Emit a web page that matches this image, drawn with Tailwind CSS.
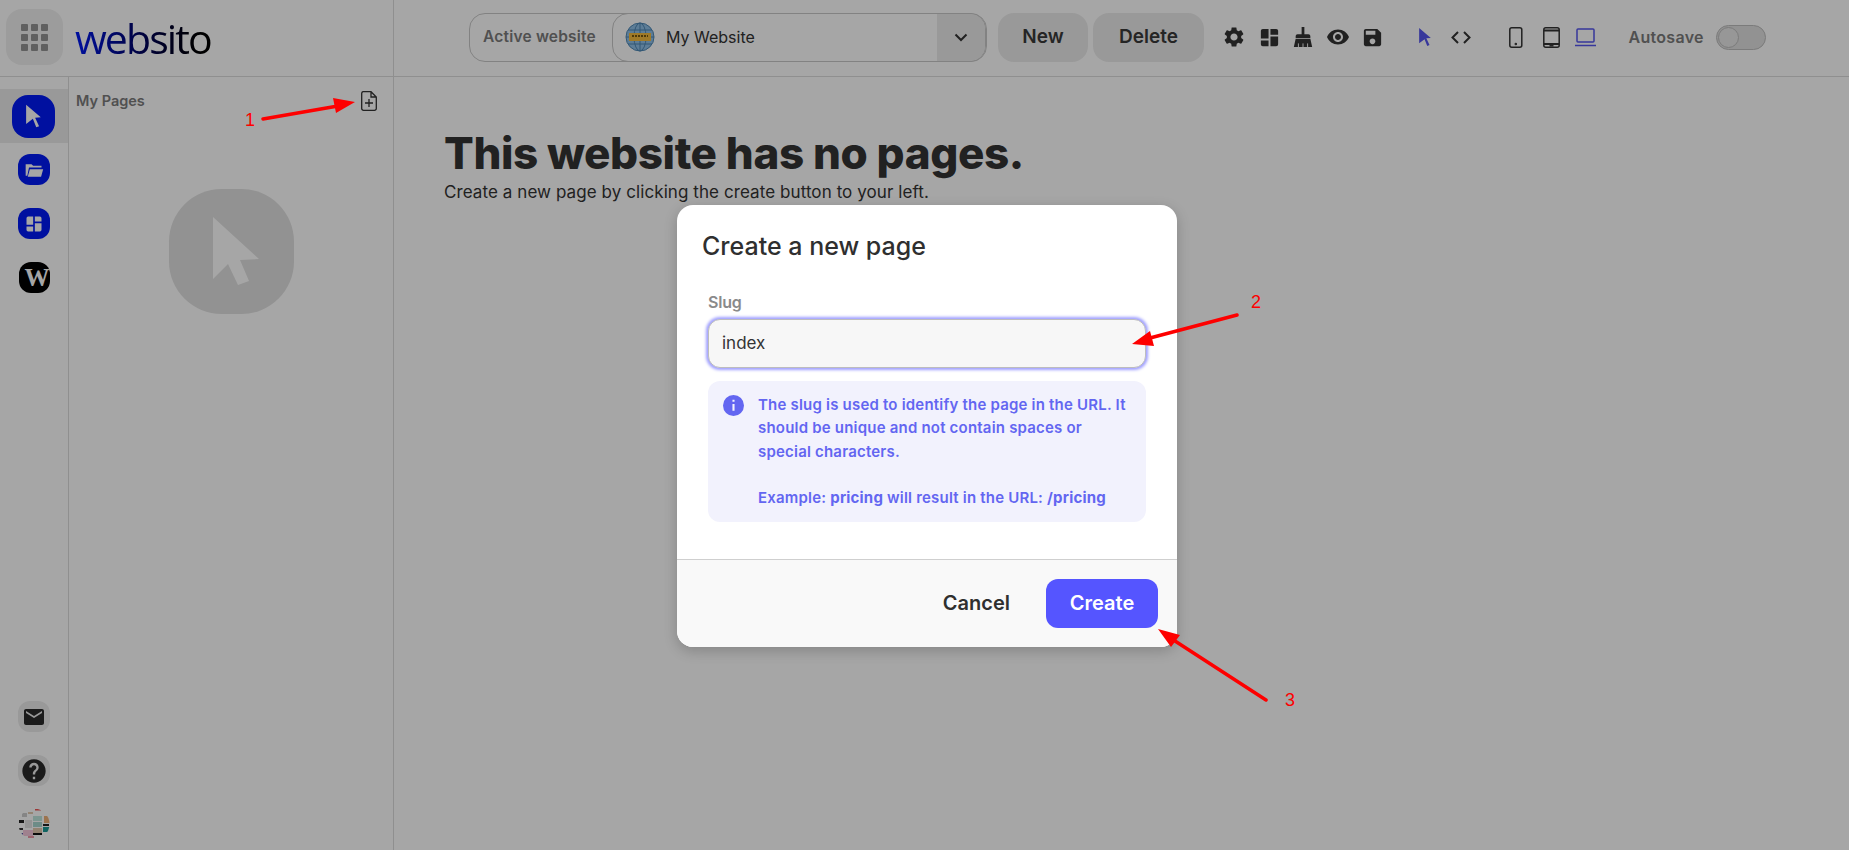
<!doctype html>
<html lang="en">
<head>
<meta charset="utf-8">
<title>Websito</title>
<script src="https://cdn.jsdelivr.net/npm/@tailwindcss/browser@4"></script>
</head>
<body class="overflow-hidden bg-white">
<div class="relative flex h-[850px] w-[1849px] flex-col overflow-hidden bg-white font-['Inter',sans-serif] text-[#3a3a3a]">
  <!-- header -->
  <header class="flex h-[77px] shrink-0 items-center border-b border-[#dcdcdc] pb-[2px]">
    <div class="ml-[6px] flex h-[56px] w-[57px] items-center justify-center rounded-2xl bg-[#f0f0f0]">
      <div class="grid grid-cols-3 gap-[3px]">
        <span class="h-[7px] w-[7px] rounded-[1px] bg-[#949494]"></span><span class="h-[7px] w-[7px] rounded-[1px] bg-[#949494]"></span><span class="h-[7px] w-[7px] rounded-[1px] bg-[#949494]"></span>
        <span class="h-[7px] w-[7px] rounded-[1px] bg-[#949494]"></span><span class="h-[7px] w-[7px] rounded-[1px] bg-[#949494]"></span><span class="h-[7px] w-[7px] rounded-[1px] bg-[#949494]"></span>
        <span class="h-[7px] w-[7px] rounded-[1px] bg-[#949494]"></span><span class="h-[7px] w-[7px] rounded-[1px] bg-[#949494]"></span><span class="h-[7px] w-[7px] rounded-[1px] bg-[#949494]"></span>
      </div>
    </div>
    <div class="mt-[2px] ml-[12px] w-[318px]"><span class="bg-linear-to-r from-[#0019f6] to-black bg-clip-text font-['Open_Sans',sans-serif] text-[41px] leading-[48px] font-medium tracking-[-1.900px] text-transparent">websito</span></div>
    <div class="h-[76px] w-px self-start bg-[#dcdcdc]"></div>

    <div class="ml-[75px] flex h-[49px] w-[518px] items-center rounded-2xl border border-[#c8c8c8]">
      <span class="w-[142px] pl-[13px] text-[15.500px] font-semibold tracking-[0.200px] text-[#7c7c7c]">Active website</span>
      <div class="flex h-[49px] flex-1 items-center overflow-hidden rounded-2xl border border-[#c8c8c8]">
        <svg class="ml-[12px] h-[30px] w-[30px]" viewBox="0 0 30 30"><circle cx="15" cy="15" r="14" fill="#8fc0e8" stroke="#4f87b4"/><g fill="none" stroke="#4f87b4"><ellipse cx="15" cy="15" rx="6" ry="14"/><path d="M1 15h28M3 8h24M3 22h24M15 1v28"/></g><rect x="4" y="11" width="22" height="8" fill="#f6bc3e"/><path d="M7 14h16" stroke="#7a5a10" stroke-width="2" stroke-dasharray="2 1"/></svg>
        <span class="ml-[11px] flex-1 text-[16px] text-[#333]">My Website</span>
        <div class="flex h-full w-[48px] items-center justify-center bg-[#ebebeb]">
          <svg class="h-[14px] w-[14px]" viewBox="0 0 14 14" fill="none" stroke="#333" stroke-width="2"><path d="M1.500 4.500 7 10l5.500-5.500"/></svg>
        </div>
      </div>
    </div>

    <button class="ml-[11px] h-[49px] w-[90px] rounded-2xl bg-[#ececec] text-[19px] font-semibold text-[#3a3a3a]">New</button>
    <button class="ml-[5px] h-[49px] w-[111px] rounded-2xl bg-[#ececec] text-[19px] font-semibold text-[#3a3a3a]">Delete</button>

    <div class="ml-[18px] flex items-center gap-[11.500px] text-[#333]">
      <svg class="h-[24px] w-[24px]" viewBox="0 0 24 24" fill="currentColor"><path d="M19.140 12.940c.04-.3.06-.61.06-.94 0-.32-.02-.64-.07-.94l2.030-1.580c.18-.14.23-.41.12-.61l-1.920-3.320c-.12-.22-.37-.29-.59-.22l-2.390.96c-.5-.38-1.030-.7-1.620-.94l-.36-2.540c-.04-.24-.24-.41-.48-.41h-3.840c-.24 0-.43.17-.47.41l-.36 2.540c-.59.24-1.130.57-1.620.94l-2.390-.96c-.22-.08-.47 0-.59.22L2.740 8.870c-.12.21-.08.47.12.61l2.030 1.580c-.05.3-.09.63-.09.94s.02.64.07.94l-2.030 1.580c-.18.14-.23.41-.12.61l1.920 3.320c.12.22.37.29.59.22l2.390-.96c.5.38 1.030.7 1.620.94l.36 2.540c.05.24.24.41.48.41h3.840c.24 0 .44-.17.47-.41l.36-2.540c.59-.24 1.130-.56 1.620-.94l2.390.96c.22.08.47 0 .59-.22l1.920-3.320c.12-.22.07-.47-.12-.61l-2.010-1.580zM12 15.600c-1.980 0-3.600-1.620-3.600-3.600s1.620-3.600 3.600-3.600 3.600 1.620 3.600 3.600-1.620 3.600-3.600 3.600z"/></svg>
      <svg class="h-[23px] w-[23px]" viewBox="0 0 24 24" fill="currentColor"><path d="M3 13h8V3H5a2 2 0 0 0-2 2v8zm0 8h8v-6H3v4a2 2 0 0 0 2 2zm10 0h6a2 2 0 0 0 2-2v-8h-8v10zm0-18v6h8V5a2 2 0 0 0-2-2h-6z"/></svg>
      <svg class="h-[22px] w-[22px]" viewBox="0 0 24 24" fill="currentColor"><path d="M10.500 1h3v8h4.500a2 2 0 0 1 2 2v2H4v-2a2 2 0 0 1 2-2h4.500V1zM4 14h16l2 9H2l2-9z"/><path d="M7 23v-4M12 23v-4M17 23v-4" stroke="#fff" stroke-width="1"/></svg>
      <svg class="h-[24px] w-[24px]" viewBox="0 0 24 24" fill="currentColor"><path d="M12 4.500C7 4.500 2.730 7.610 1 12c1.730 4.390 6 7.500 11 7.500s9.270-3.110 11-7.500c-1.730-4.390-6-7.500-11-7.500zM12 17c-2.760 0-5-2.240-5-5s2.240-5 5-5 5 2.240 5 5-2.240 5-5 5zm0-8c-1.660 0-3 1.340-3 3s1.340 3 3 3 3-1.340 3-3-1.340-3-3-3z"/></svg>
      <svg class="h-[23px] w-[23px]" viewBox="0 0 24 24" fill="currentColor"><path d="M17 3H5c-1.110 0-2 .9-2 2v14c0 1.100.89 2 2 2h14c1.100 0 2-.9 2-2V7l-4-4zm-5 16c-1.660 0-3-1.340-3-3s1.340-3 3-3 3 1.340 3 3-1.340 3-3 3zm3-10H5V5h10v4z"/></svg>
    </div>
    <div class="ml-[34px] flex items-center gap-[19px]">
      <svg class="h-[18px] w-[14px]" viewBox="0 0 15 20" fill="#5555ee"><path d="M1 0 14 11l-5 .5L12.500 19l-2.500 1-3-7.500L1 17z"/></svg>
      <svg class="h-[13px] w-[20px]" viewBox="0 0 20 13" fill="none" stroke="#333" stroke-width="2"><path d="M7 1 1.500 6.500 7 12M13 1l5.500 5.500L13 12"/></svg>
    </div>
    <div class="ml-[38px] flex items-center">
      <svg class="h-[21px] w-[14px]" viewBox="0 0 14 21" fill="none" stroke="#333" stroke-width="1.500"><rect x=".8" y=".8" width="12" height="19.400" rx="2"/><circle cx="6.800" cy="17" r=".5"/></svg>
      <svg class="ml-[19.500px] h-[21px] w-[17px]" viewBox="0 0 17 21" fill="none" stroke="#333" stroke-width="1.500"><rect x=".8" y=".8" width="15.400" height="19.400" rx="2"/><path d="M1 3.500h15M1 17h15" stroke-width="2"/><path d="M6.500 18.800h4"/></svg>
      <svg class="ml-[15px] h-[19px] w-[21px]" viewBox="0 0 21 19" fill="none" stroke="#5555ee" stroke-width="1.500"><rect x="2" y="1" width="17" height="13" rx="1"/><path d="M0 17.500h21"/></svg>
    </div>
    <span class="ml-[33px] w-[87px] text-[16px] font-semibold tracking-[0.300px] text-[#7c7c7c]">Autosave</span>
    <div class="flex h-[25px] w-[50px] items-center rounded-full border border-[#bdbdbd] bg-[#e0e0e0] pl-px">
      <span class="h-[21px] w-[21px] rounded-full border border-[#bdbdbd] bg-[#e8e8e8]"></span>
    </div>
  </header>

  <div class="flex min-h-0 flex-1">
    <!-- rail -->
    <aside class="flex w-[69px] shrink-0 flex-col items-center border-r border-[#dcdcdc] pt-[12px] pb-[10px]">
      <div class="flex h-[54px] w-full items-center bg-[#ebebeb] pl-[12px]">
        <div class="flex h-[43px] w-[43px] items-center justify-center rounded-2xl bg-[#0019f6]">
          <svg class="h-[24px] w-[18px]" viewBox="0 0 16 20" fill="#fff"><path d="M1 0 14 11l-5 .5L12.500 19l-2.500 1-3-7.500L1 17z"/></svg>
        </div>
      </div>
      <div class="mt-[11px] flex h-[31px] w-[32px] items-center justify-center rounded-xl bg-[#0019f6]">
        <svg class="h-[20px] w-[20px]" viewBox="0 0 24 24" fill="#fff"><path d="M2 5h7l2 2h10v2H6l-2 10H2zM7 11h16l-2.500 9H4.500z"/></svg>
      </div>
      <div class="mt-[23px] flex h-[31px] w-[32px] items-center justify-center rounded-xl bg-[#0019f6]">
        <svg class="h-[20px] w-[20px]" viewBox="0 0 24 24" fill="#fff"><path d="M3 13h8V3H5a2 2 0 0 0-2 2v8zm0 8h8v-6H3v4a2 2 0 0 0 2 2zm10 0h6a2 2 0 0 0 2-2v-8h-8v10zm0-18v6h8V5a2 2 0 0 0-2-2h-6z"/></svg>
      </div>
      <div class="mt-[23px] flex h-[31px] w-[31px] items-center rounded-xl bg-black pl-[6px] font-['Liberation_Serif',serif] text-[25px] leading-none font-bold text-white">W</div>

      <div class="mt-auto flex h-[31px] w-[32px] items-center justify-center rounded-xl bg-[#ebebeb]">
        <svg class="h-[24px] w-[24px]" viewBox="0 0 24 24" fill="#2a2a2a"><path d="M20 4H4c-1.100 0-2 .9-2 2v12c0 1.100.9 2 2 2h16c1.100 0 2-.9 2-2V6c0-1.100-.9-2-2-2zm0 4-8 5-8-5V6l8 5 8-5v2z"/></svg>
      </div>
      <div class="mt-[23px] flex h-[31px] w-[32px] items-center justify-center rounded-xl bg-[#ebebeb]">
        <svg class="h-[28px] w-[28px]" viewBox="0 0 24 24" fill="#2a2a2a"><path d="M12 2C6.480 2 2 6.480 2 12s4.480 10 10 10 10-4.480 10-10S17.520 2 12 2zm1 17h-2v-2h2v2zm2.070-7.750-.9.92C13.450 12.900 13 13.500 13 15h-2v-.5c0-1.100.45-2.100 1.170-2.830l1.240-1.260c.37-.36.59-.86.59-1.410 0-1.100-.9-2-2-2s-2 .9-2 2H8c0-2.210 1.790-4 4-4s4 1.790 4 4c0 .88-.36 1.680-.93 2.250z"/></svg>
      </div>
      <svg class="mt-[22px] h-[32px] w-[32px]" viewBox="0 0 32 32"><clipPath id="c"><circle cx="16" cy="16" r="15.500"/></clipPath><g clip-path="url(#c)"><rect width="32" height="32" fill="#fff"/><rect x="26" y="8" width="6" height="7" fill="#f0b27a"/><rect x="25" y="19" width="7" height="5" fill="#1a9a95"/><rect x="15" y="8" width="9" height="5" fill="#bfe6de"/><rect x="15" y="14" width="9" height="5" fill="#a8d8d0"/><rect x="5" y="22" width="10" height="6" fill="#f4c6da"/><rect x="15" y="20" width="9" height="5" fill="#e2c9b0"/><rect x="1" y="12" width="5" height="3" fill="#222"/><rect x="15" y="25" width="9" height="2" fill="#111"/><rect x="25" y="16" width="6" height="2" fill="#222"/><rect x="17" y="1" width="6" height="1.500" fill="#e55"/><rect x="4" y="5" width="5" height="4" fill="#ccc"/><rect x="10" y="4" width="5" height="2" fill="#e2c9b0"/><rect x="10" y="28" width="6" height="2" fill="#e9a"/><rect x="1" y="20" width="4" height="2" fill="#333"/><rect x="7" y="12" width="7" height="8" fill="#e4e4e4"/><rect x="3" y="25" width="2" height="2" fill="#55a"/></g></svg>
    </aside>

    <!-- pages panel -->
    <section class="w-[325px] shrink-0 border-r border-[#dcdcdc] pl-[7px]">
      <div class="flex justify-between pt-[14px] pr-[16px]">
        <span class="-mt-px text-[14.500px] font-semibold text-[#7c7c7c]">My Pages</span>
        <svg class="h-[20px] w-[16px]" viewBox="0 0 16 20" fill="none" stroke="#333" stroke-width="1.300"><path d="M2 .7h8L15.300 6v11.500a1.800 1.800 0 0 1-1.800 1.800h-11a1.800 1.800 0 0 1-1.800-1.800V2.500A1.800 1.800 0 0 1 2 .7zM10 .7V6h5.300M8 8v8M4 12h8"/></svg>
      </div>
      <div class="mt-[77px] ml-[93px] flex h-[125px] w-[125px] items-center justify-center rounded-[42%] bg-[#e1e1e1]">
        <svg class="ml-[8px] h-[68px] w-[48px]" viewBox="0 0 46 68" fill="#fff"><path d="M0 0 46 42l-19 1 9 21-11 4-10-21L0 62z"/></svg>
      </div>
    </section>

    <!-- main -->
    <main class="flex-1 pt-[51px] pl-[50px]">
      <h1 class="text-[44px] leading-[50px] font-extrabold tracking-[-0.400px] text-[#333]">This website has no pages.</h1>
      <p class="mt-[2px] text-[17px] leading-[24px] tracking-[0.080px] text-[#333]">Create a new page by clicking the create button to your left.</p>
    </main>
  </div>

  <!-- backdrop -->
  <div class="absolute inset-0 bg-black/35"></div>

  <!-- modal -->
  <div class="absolute top-[205px] left-[677px] w-[500px] overflow-hidden rounded-2xl bg-white shadow-[0_4px_14px_rgba(0,0,0,0.2)]">
    <div class="px-[25px] pt-[23px]">
      <h2 class="text-[25px] leading-[36px] font-medium text-[#2f2f2f]">Create a new page</h2>
      <label class="mt-[28px] ml-[6px] block text-[16px] leading-[20px] font-semibold tracking-[-0.200px] text-[#8a8a8a]">Slug</label>
      <div class="mt-[7px] ml-[6px] flex h-[49px] w-[438px] items-center rounded-xl border border-[#bdbdbd] bg-[#f7f7f7] pl-[13px] text-[17px] text-[#333] shadow-[0_0_3px_2px_#a0a0ff]">index</div>
      <div class="mt-[13px] ml-[6px] flex h-[141px] w-[438px] gap-[14px] rounded-xl bg-[#f2f2fd] pt-[12px] pl-[15px] text-[15px] leading-[23.250px] font-semibold tracking-[0.200px] text-[#6366f1]">
        <svg class="mt-[2px] h-[21px] w-[21px] shrink-0" viewBox="0 0 20 20" fill="#6366f1"><path d="M10 0a10 10 0 1 0 0 20 10 10 0 0 0 0-20zm1 15H9V8.500h2V15zm0-8.500H9V4.500h2v2z"/></svg>
        <div class="w-[374px]">
          <p>The slug is used to identify the page in the URL. It should be unique and not contain spaces or special characters.</p>
          <p class="mt-[23.250px]">Example: <b class="font-bold">pricing</b> will result in the URL: <b class="font-bold">/pricing</b></p>
        </div>
      </div>
    </div>
    <div class="mt-[37px] flex h-[88px] items-center justify-end border-t border-[#cfcfcf] bg-[#f9f9f9] pr-[19px]">
      <button class="mr-[36px] pb-[2px] text-[20px] font-semibold text-[#2f2f2f]">Cancel</button>
      <button class="h-[49px] w-[112px] rounded-xl bg-[#5555ff] pb-[2px] text-[20px] font-semibold text-white">Create</button>
    </div>
  </div>

  <!-- tutorial annotations -->
  <svg class="absolute inset-0 h-[850px] w-[1849px]" viewBox="0 0 1849 850" fill="none">
    <path d="M263 119 338 106M1237 315 1150 338M1266 700 1175 641" stroke="#fe0000" stroke-width="3.500" stroke-linecap="round"/>
    <path d="M355 102 333 98 336 113zM1132 344 1150 331 1154 346zM1158 629 1180 635 1171 647z" fill="#fe0000"/>
  </svg>
  <span class="absolute top-[107px] left-[245px] font-['Liberation_Sans',sans-serif] text-[18px] text-[#fe0000]">1</span>
  <span class="absolute top-[289px] left-[1251px] font-['Liberation_Sans',sans-serif] text-[18px] text-[#fe0000]">2</span>
  <span class="absolute top-[687px] left-[1285px] font-['Liberation_Sans',sans-serif] text-[18px] text-[#fe0000]">3</span>
</div>
</body>
</html>
